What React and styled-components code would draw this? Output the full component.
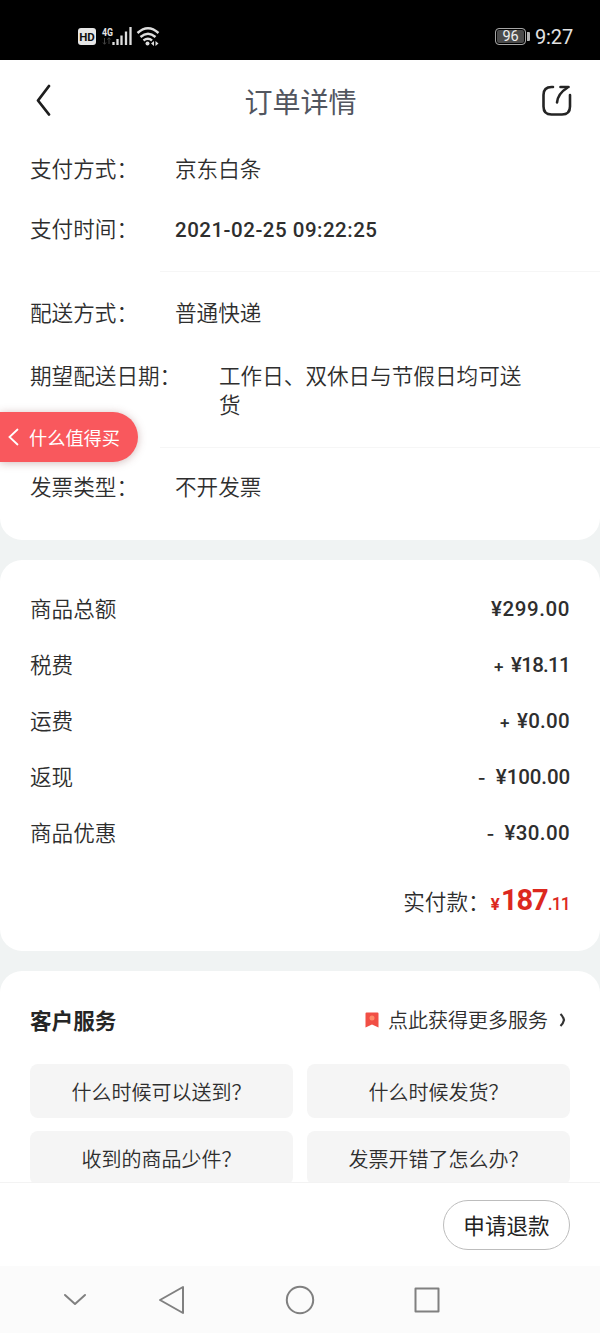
import React from 'react'
import styled, { createGlobalStyle } from 'styled-components'

const GlobalStyle = createGlobalStyle`
*{
    box-sizing:border-box;
}
body{
    margin:0;
    background-color:#f0f3f3;
    font-family:"Noto Sans CJK SC", sans-serif;
    font-weight:350;
    color:#2e2e2e;
}
`

const Screen = styled.div`
display:flex;
flex-direction:column;
position:relative;
width:600px;
height:1333px;
overflow:hidden;
background-color:#f0f3f3;
`

const StatusBar = styled.div`
display:flex;
flex:none;
justify-content:space-between;
align-items:center;
height:60px;
padding:13px 27px 0 78px;
background-color:#000;
`

const StatusGroup = styled.div`
display:flex;
align-items:center;
`

const Clock = styled.span`
font-family:Roboto, sans-serif;
font-weight:400;
font-size:20px;
line-height:24px;
letter-spacing:-.15px;
color:#e2e2e2;
margin-left:5px;
`

const Battery = styled.div`
display:flex;
align-items:center;
justify-content:center;
width:31px;
height:17px;
border:1px solid #a5a5a5;
border-radius:4px;
box-shadow:inset 0 0 0 1px #000;
background-color:#4b4b4b;
font-family:Roboto, sans-serif;
font-weight:400;
font-size:14.5px;
line-height:15px;
color:#f0f0f0;
`

const BatteryTip = styled.div`
width:3px;
height:9px;
margin-left:1px;
background-color:#b5b5b5;
border-radius:0 1px 1px 0;
`

const Header = styled.div`
display:flex;
align-items:center;
justify-content:space-between;
height:82px;
padding:0 26px 0 34px;
`

const Title = styled.h1`
margin:0 0 0 9px;
font-size:28px;
line-height:40px;
font-weight:400;
color:#52565f;
`

const Card = styled.section`
flex:${props => props.$fill ? "1" : "none"};
min-height:0;
overflow:hidden;
height:${props => props.$height ? `${props.$height}px` : "auto"};
margin-top:${props => props.$first ? "0" : "20px"};
border-radius:${props => props.$first ? "0 0 22px 22px" : props.$fill ? "22px 22px 0 0" : "22px"};
background-color:#fff;
`

const InfoRow = styled.div`
display:flex;
align-items:${props => props.$top ? "flex-start" : "center"};
height:${props => props.$height}px;
padding:${props => props.$top ? "8px" : "0"} 30px 0;
font-size:21.6px;
line-height:29px;
`

const Label = styled.span`
flex:none;
width:${props => props.$wide ? "189px" : "145px"};
margin:-2px 0 2px;
white-space:nowrap;
`

const Value = styled.span`
width:${props => props.$wide ? "308px" : "auto"};
margin:-2px 0 2px;
`

const Figure = styled.span`
display:flex;
align-items:baseline;
margin-top:2px;
font-family:Roboto, "Noto Sans CJK SC", sans-serif;
font-size:20.5px;
font-weight:500;
white-space:pre;
letter-spacing:${props => props.$spacing || 0}px;
`

const Sign = styled.span`
width:18px;
font-family:Inter, sans-serif;
font-size:17px;
font-weight:600;
`

const Divider = styled.div`
height:1px;
margin:${props => props.$gap}px 0 0 160px;
background-color:#f6f6f6;
`

const PriceList = styled.div`
padding:20px 30px 0;
`

const PriceRow = styled.div`
display:flex;
justify-content:space-between;
align-items:center;
height:56px;
font-size:21.6px;
`

const PriceName = styled.span`
margin-top:-2px;
`

const Total = styled.div`
display:flex;
justify-content:flex-end;
align-items:baseline;
height:60px;
margin-top:20px;
font-size:21.6px;
line-height:40px;
`

const TotalPrice = styled.span`
font-family:Roboto, sans-serif;
font-weight:${props => props.$light ? "500" : "700"};
font-size:${props => props.$big ? "29px" : "17.5px"};
letter-spacing:${props => props.$spacing}px;
color:#dc281e;
`

const Yen = styled(TotalPrice)`
margin-left:1px;
font-family:Inter, sans-serif;
font-size:16.5px;
`

const ServiceHead = styled.div`
display:flex;
align-items:center;
justify-content:space-between;
height:93px;
padding:4px 33px 0 30px;
`

const ServiceTitle = styled.h2`
margin:0;
font-size:21.6px;
line-height:32px;
font-weight:700;
color:#262626;
`

const MoreLink = styled.div`
display:flex;
align-items:center;
font-size:20px;
line-height:30px;
`

const MoreText = styled.span`
margin:0 10px 0 9px;
`

const Questions = styled.div`
display:grid;
grid-template-columns:1fr 1fr;
gap:13px 14px;
padding:0 30px;
`

const Question = styled.div`
display:flex;
align-items:center;
justify-content:center;
height:54px;
padding-top:1px;
border-radius:8px;
background-color:#f5f5f5;
font-size:20px;
`

const ActionBar = styled.div`
display:flex;
flex:none;
align-items:flex-start;
justify-content:flex-end;
height:84px;
padding:17px 30px 0;
border-top:1px solid #f3f3f3;
background-color:#fff;
`

const RefundButton = styled.button`
width:127px;
height:50px;
padding:0 0 1px;
border:1px solid #bdbdbd;
border-radius:25px;
background-color:#fff;
font-family:inherit;
font-size:21.6px;
color:#222;
`

const NavBar = styled.div`
display:flex;
flex:none;
align-items:center;
height:67px;
padding-left:62px;
background-color:#fbfbfb;
`

const BackTag = styled.div`
display:flex;
align-items:center;
position:absolute;
left:0;
top:412px;
width:138px;
height:50px;
padding:0 0 0 8px;
border-radius:0 25px 25px 0;
background-color:#f9585d;
box-shadow:0 1px 8px rgba(120,60,60,.35);
font-size:18.2px;
font-weight:400;
color:#fff;
`

const TagText = styled.span`
margin:-1px 0 0 10px;
`

const prices = [
    { name: '商品总额', value: '¥299.00', spacing: .6 },
    { name: '税费', sign: '+', value: '¥18.11', spacing: -.7 },
    { name: '运费', sign: '+', value: '¥0.00', spacing: .3 },
    { name: '返现', sign: '-', value: '¥100.00', spacing: -.1 },
    { name: '商品优惠', sign: '-', value: '¥30.00', spacing: .4 },
]

const questions = ['什么时候可以送到？', '什么时候发货？', '收到的商品少件？', '发票开错了怎么办？']

const SignalIcons = () => (
    <svg width="84" height="24" viewBox="0 0 84 24">
        <rect x="0" y="3" width="18" height="17" rx="3" fill="#e6e6e6" />
        <text x="9" y="15.500" textAnchor="middle" fontFamily="Roboto" fontWeight="700" fontSize="11.500" fill="#111">HD</text>
        <text x="24" y="10.500" fontFamily="Roboto" fontWeight="700" fontSize="11" textLength="11" lengthAdjust="spacingAndGlyphs" fill="#e6e6e6">4G</text>
        <path d="M26.500 13v6M25 17.500l1.500 1.800 1.500-1.800M31 19v-6M29.500 14.500l1.500-1.800 1.500 1.800" fill="none" stroke="#444" strokeWidth="1" />
        <path d="M35.500 17v3M39.500 14v6M43.500 10.500v9.500M48 6.500v13.500M52.500 2v18" stroke="#dedede" strokeWidth="2.300" />
        <g fill="none" stroke="#dedede" strokeWidth="2.400">
            <path d="M59.500 8Q70 -1.500 80.500 8" />
            <path d="M62.500 12Q70 5.500 77.500 12" />
            <path d="M65.500 15.500Q70 12 74 15.500" />
        </g>
        <circle cx="69.500" cy="18.500" r="2" fill="#dedede" />
        <path d="M76 16v5l-3-2.500zM77.500 16v5l3-2.500z" fill="#dedede" />
    </svg>
)

const BackIcon = () => (
    <svg width="18" height="34" viewBox="0 0 18 34" fill="none" stroke="#1e1e1e" strokeWidth="2.800" strokeLinecap="round" strokeLinejoin="round">
        <path d="M15 2L4 16.500l11 14" />
    </svg>
)

const ShareIcon = () => (
    <svg width="34" height="34" viewBox="0 0 34 34" fill="none" stroke="#242424" strokeWidth="2.600" strokeLinecap="round">
        <path d="M13 3H11.500Q3.500 3 3.500 11V22.500Q3.500 30.500 11.500 30.500H22Q30 30.500 30 22.500V11" />
        <path d="M17 18.500Q18 9.500 27 4" />
        <path d="M20.500 3H28.500" />
    </svg>
)

const App = () => {
    return (
        <>
            <GlobalStyle />
            <Screen>
                <StatusBar>
                    <SignalIcons />
                    <StatusGroup>
                        <Battery>96</Battery>
                        <BatteryTip />
                        <Clock>9:27</Clock>
                    </StatusGroup>
                </StatusBar>

                <Card $first $height={480}>
                    <Header>
                        <BackIcon />
                        <Title>订单详情</Title>
                        <ShareIcon />
                    </Header>
                    <InfoRow $height={54}>
                        <Label>支付方式：</Label>
                        <Value>京东白条</Value>
                    </InfoRow>
                    <InfoRow $height={66}>
                        <Label>支付时间：</Label>
                        <Figure $spacing={.5}>2021-02-25 09:22:25</Figure>
                    </InfoRow>
                    <Divider $gap={9} />
                    <InfoRow $height={82}>
                        <Label>配送方式：</Label>
                        <Value>普通快递</Value>
                    </InfoRow>
                    <InfoRow $top $height={65}>
                        <Label $wide>期望配送日期：</Label>
                        <Value $wide>工作日、双休日与节假日均可送货</Value>
                    </InfoRow>
                    <Divider $gap={28} />
                    <InfoRow $height={78}>
                        <Label>发票类型：</Label>
                        <Value>不开发票</Value>
                    </InfoRow>
                </Card>

                <Card $height={391}>
                    <PriceList>
                        {prices.map(item => (
                            <PriceRow key={item.name}>
                                <PriceName>{item.name}</PriceName>
                                <Figure $spacing={item.spacing}>
                                    {item.sign && <Sign>{item.sign}</Sign>}
                                    {item.value}
                                </Figure>
                            </PriceRow>
                        ))}
                        <Total>
                            <span>实付款：</span>
                            <Yen $spacing={1}>¥</Yen>
                            <TotalPrice $big $spacing={-1.1}>187</TotalPrice>
                            <TotalPrice $light $spacing={-.8}>.11</TotalPrice>
                        </Total>
                    </PriceList>
                </Card>

                <Card $fill>
                    <ServiceHead>
                        <ServiceTitle>客户服务</ServiceTitle>
                        <MoreLink>
                            <svg width="14" height="16" viewBox="0 0 14 16">
                                <path d="M1.500 0.500h11q1 0 1 1V15.500L7 12.500.5 15.500V1.500q0-1 1-1z" fill="#f14f45" />
                                <circle cx="7" cy="6" r="2.500" fill="#ff8a68" />
                            </svg>
                            <MoreText>点此获得更多服务</MoreText>
                            <svg width="9" height="16" viewBox="0 0 9 16" fill="none" stroke="#333" strokeWidth="2.200">
                                <path d="M2.500 2Q5.200 4.500 6 8Q5.200 11.500 2.500 14" />
                            </svg>
                        </MoreLink>
                    </ServiceHead>
                    <Questions>
                        {questions.map(text => <Question key={text}>{text}</Question>)}
                    </Questions>
                </Card>

                <ActionBar>
                    <RefundButton>申请退款</RefundButton>
                </ActionBar>

                <NavBar>
                    <svg width="380" height="34" viewBox="0 0 380 34" fill="none" stroke="#808080" strokeWidth="2" strokeLinecap="round" strokeLinejoin="round">
                        <path d="M3 12l10 9 10-9" />
                        <path d="M121 4v26L98 17z" />
                        <circle cx="238" cy="17" r="13.200" />
                        <rect x="353.500" y="5.500" width="23" height="23" />
                    </svg>
                </NavBar>

                <BackTag>
                    <svg width="11" height="18" viewBox="0 0 11 18" fill="none" stroke="#fff" strokeWidth="1.800" strokeLinecap="round">
                        <path d="M9.500 1.500L1.500 9l8 7.500" />
                    </svg>
                    <TagText>什么值得买</TagText>
                </BackTag>
            </Screen>
        </>
    )
}

export default App
